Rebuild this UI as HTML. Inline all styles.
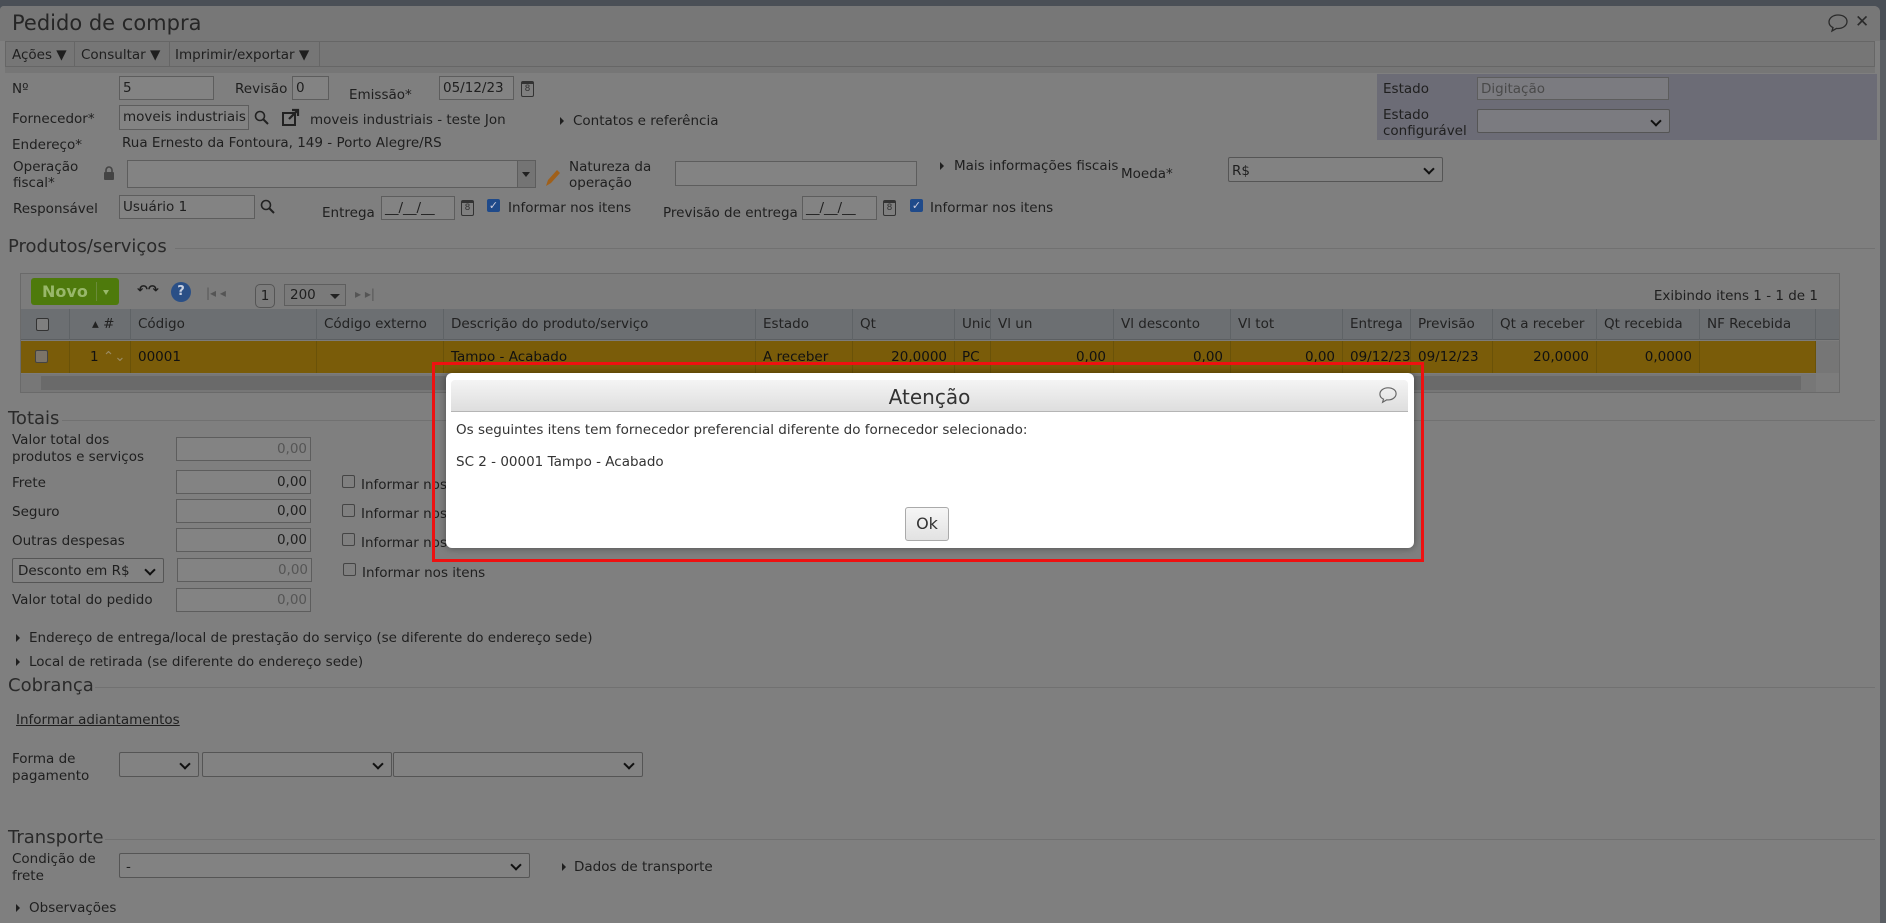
<!DOCTYPE html>
<html><head><meta charset="utf-8"><style>
*{box-sizing:border-box;margin:0;padding:0}
body{width:1886px;height:923px;overflow:hidden;background:#4a4f56;font-family:"DejaVu Sans","Liberation Sans",sans-serif;font-size:13.5px;color:#1f1f1f;position:relative}
.a{position:absolute;white-space:nowrap;line-height:16px}
.win{position:absolute;left:0;top:6px;width:1880px;height:917px;background:#7f7f7f;border-radius:4px 6px 0 0;overflow:hidden}
.inp{position:absolute;border:1px solid #5d5d5d;background:#838383;height:24px;padding:3px 3px;line-height:16px;font-size:13.5px;white-space:nowrap;overflow:hidden}
.sel{position:absolute;border:1px solid #555;background:#828282;height:25px;border-radius:2px}
.sel:after{content:"";position:absolute;right:9px;top:7px;width:6px;height:6px;border-right:2px solid #111;border-bottom:2px solid #111;transform:rotate(45deg)}
.cb{position:absolute;width:13px;height:13px;border:1px solid #444;border-radius:2px;background:#7f7f7f}
.cbc{position:absolute;width:13px;height:13px;border-radius:2px;background:#1f4a8a;color:#ccd;font-size:11px;line-height:13px;text-align:center}
.tri{position:absolute;width:0;height:0;border-left:4px solid #1f1f1f;border-top:4px solid transparent;border-bottom:4px solid transparent}
.sec{position:absolute;font-size:18px;color:#2a2a2a;line-height:20px;white-space:nowrap}
.hl{position:absolute;height:1px;background:#717171}
.cal{position:absolute;width:13px;height:16px;border:1px solid #333;border-top:3px solid #333;border-radius:2px;font-size:9px;text-align:center;line-height:11px;color:#333}
.th{position:absolute;top:0;height:31px;border-right:1px solid #5f6366;line-height:31px;padding-left:7px;color:#222;white-space:nowrap;overflow:hidden}
.td{position:absolute;top:0;height:32px;border-right:1px solid #6a5208;line-height:32px;padding:0 7px;color:#111;white-space:nowrap;overflow:hidden}
.r{text-align:right}
</style></head><body>
<div class="win">
<div style="position:absolute;left:0;top:0;width:1880px;height:35px;background:#777"></div>
<div class="a" style="left:12px;top:4px;font-size:21px;line-height:26px;color:#262626">Pedido de compra</div>
<svg style="position:absolute;left:1827px;top:7px" width="22" height="20" viewBox="0 0 22 20"><path d="M11 2C6 2 2 5 2 9c0 2.5 1.6 4.5 4 5.6L5 18l4.5-2.6c.5.1 1 .1 1.5.1 5 0 9-3 9-7S16 2 11 2z" fill="none" stroke="#2a2a2a" stroke-width="1.3"/></svg>
<div class="a" style="left:1855px;top:8px;font-size:17px;font-weight:bold;color:#2a2a2a">✕</div>
<div style="position:absolute;left:5px;top:35px;width:1870px;height:26px;background:#767676;border:1px solid #666"></div>
<div class="a" style="left:12px;top:41px">Ações ▼</div>
<div style="position:absolute;left:74px;top:36px;width:1px;height:24px;background:#666"></div>
<div class="a" style="left:81px;top:41px">Consultar ▼</div>
<div style="position:absolute;left:169px;top:36px;width:1px;height:24px;background:#666"></div>
<div class="a" style="left:175px;top:41px">Imprimir/exportar ▼</div>
<div style="position:absolute;left:319px;top:36px;width:1px;height:24px;background:#666"></div>
<div style="position:absolute;left:5px;top:61px;width:1870px;height:6px;background:#767676"></div>

<div style="position:absolute;left:1377px;top:68px;width:500px;height:66px;background:#6c6c76"></div>
<div class="a" style="left:1383px;top:75px">Estado</div>
<div class="inp" style="left:1477px;top:71px;width:192px;height:23px;background:#7b7b80;color:#4a4a4a">Digitação</div>
<div class="a" style="left:1383px;top:101px;line-height:16px">Estado<br>configurável</div>
<div class="sel" style="left:1477px;top:103px;width:193px;height:24px;background:#7b7b80"></div>

<div class="a" style="left:12px;top:75px">Nº</div>
<div class="inp" style="left:119px;top:70px;width:95px">5</div>
<div class="a" style="left:235px;top:75px">Revisão</div>
<div class="inp" style="left:292px;top:70px;width:37px">0</div>
<div class="a" style="left:349px;top:81px">Emissão*</div>
<div class="inp" style="left:439px;top:70px;width:75px">05/12/23</div>
<div class="cal" style="left:521px;top:75px">8</div>

<div class="a" style="left:12px;top:105px">Fornecedor*</div>
<div class="inp" style="left:119px;top:99px;width:130px;height:25px">moveis industriais</div>
<svg style="position:absolute;left:254px;top:104px" width="16" height="16"><circle cx="6" cy="6" r="4.5" fill="none" stroke="#222" stroke-width="1.6"/><path d="M9.5 9.5L14 14" stroke="#222" stroke-width="2"/></svg>
<svg style="position:absolute;left:281px;top:102px" width="20" height="20"><rect x="2" y="5" width="12" height="12" fill="none" stroke="#222" stroke-width="2"/><path d="M8 11L17 2M11 2h6v6" fill="none" stroke="#222" stroke-width="2.2"/></svg>
<div class="a" style="left:310px;top:106px">moveis industriais - teste Jon</div>
<div class="tri" style="left:560px;top:111px"></div>
<div class="a" style="left:573px;top:107px">Contatos e referência</div>

<div class="a" style="left:12px;top:131px">Endereço*</div>
<div class="a" style="left:122px;top:129px">Rua Ernesto da Fontoura, 149 - Porto Alegre/RS</div>

<div class="a" style="left:13px;top:153px;line-height:16px">Operação<br>fiscal*</div>
<svg style="position:absolute;left:103px;top:159px" width="12" height="16"><path d="M3 7V5a3 3 0 016 0v2" fill="none" stroke="#444" stroke-width="1.6"/><rect x="1" y="7" width="10" height="8" rx="1" fill="#444"/></svg>
<div class="inp" style="left:127px;top:154px;width:409px;height:28px"></div>
<div style="position:absolute;left:517px;top:155px;width:18px;height:26px;background:#747474;border-left:1px solid #5d5d5d"></div>
<div style="position:absolute;left:522px;top:166px;border-top:5px solid #222;border-left:4px solid transparent;border-right:4px solid transparent"></div>
<svg style="position:absolute;left:543px;top:162px" width="18" height="20"><path d="M3 18l2-6L14 2l3 3-9 10z" fill="#a0601a"/></svg>
<div class="a" style="left:569px;top:153px;line-height:16px">Natureza da<br>operação</div>
<div class="inp" style="left:675px;top:155px;width:242px;height:25px"></div>
<div class="tri" style="left:940px;top:156px"></div>
<div class="a" style="left:954px;top:152px">Mais informações fiscais</div>
<div class="a" style="left:1121px;top:160px">Moeda*</div>
<div class="sel" style="left:1228px;top:151px;width:215px;height:25px"></div>
<div class="a" style="left:1232px;top:157px">R$</div>

<div class="a" style="left:13px;top:195px">Responsável</div>
<div class="inp" style="left:119px;top:189px;width:136px">Usuário 1</div>
<svg style="position:absolute;left:260px;top:193px" width="16" height="16"><circle cx="6" cy="6" r="4.5" fill="none" stroke="#222" stroke-width="1.6"/><path d="M9.5 9.5L14 14" stroke="#222" stroke-width="2"/></svg>
<div class="a" style="left:322px;top:199px">Entrega</div>
<div class="inp" style="left:381px;top:190px;width:74px">__/__/__</div>
<div class="cal" style="left:461px;top:194px">8</div>
<div class="cbc" style="left:487px;top:193px">✓</div>
<div class="a" style="left:508px;top:194px">Informar nos itens</div>
<div class="a" style="left:663px;top:199px">Previsão de entrega</div>
<div class="inp" style="left:802px;top:190px;width:75px">__/__/__</div>
<div class="cal" style="left:883px;top:194px">8</div>
<div class="cbc" style="left:910px;top:193px">✓</div>
<div class="a" style="left:930px;top:194px">Informar nos itens</div>

<div class="sec" style="left:8px;top:231px">Produtos/serviços</div>
<div class="hl" style="left:175px;top:242px;width:1700px"></div>

<div style="position:absolute;left:20px;top:267px;width:1820px;height:120px;border:1px solid #6a6a6a;background:#7c7c7c"></div>
<div style="position:absolute;left:31px;top:272px;width:88px;height:27px;background:#4e7a0c;border-radius:3px"></div>
<div class="a" style="left:42px;top:277px;font-weight:bold;font-size:16px;line-height:18px;color:#98b86a">Novo</div>
<div style="position:absolute;left:96px;top:276px;width:1px;height:19px;background:#6a8a3a"></div>
<div style="position:absolute;left:103px;top:284px;border-top:5px solid #98b86a;border-left:3px solid transparent;border-right:3px solid transparent"></div>
<div class="a" style="left:137px;top:277px;font-weight:bold;font-size:13px">↶↷</div>
<div style="position:absolute;left:171px;top:276px;width:20px;height:20px;border-radius:50%;background:#2a4f86;color:#c8d0e0;font-size:13px;text-align:center;line-height:20px;font-weight:bold">?</div>
<div class="a" style="left:206px;top:279px;color:#555;font-size:12px">|◂ ◂</div>
<div style="position:absolute;left:255px;top:278px;width:20px;height:24px;border:1px solid #555;border-radius:5px;text-align:center;line-height:22px">1</div>
<div style="position:absolute;left:284px;top:278px;width:62px;height:22px;border:1px solid #5e5e5e;background:#7a7a7a;padding-left:5px;line-height:20px">200</div>
<div style="position:absolute;left:330px;top:288px;border-top:5px solid #222;border-left:5px solid transparent;border-right:5px solid transparent"></div>
<div class="a" style="left:355px;top:280px;color:#555;font-size:12px">▸ ▸|</div>
<div class="a" style="left:1818px;top:282px;transform:translateX(-100%)">Exibindo itens 1 - 1 de 1</div>

<div style="position:absolute;left:21px;top:303px;width:1818px;height:31px;background:#6c6f72;border-bottom:1px solid #5c5f62">
<div class="th" style="left:0;width:49px"></div>
<div class="cb" style="left:15px;top:9px;border-color:#333"></div>
<div class="th" style="left:49px;width:61px;padding-left:22px">▴ #</div>
<div class="th" style="left:110px;width:186px">Código</div>
<div class="th" style="left:296px;width:127px">Código externo</div>
<div class="th" style="left:423px;width:312px">Descrição do produto/serviço</div>
<div class="th" style="left:735px;width:97px">Estado</div>
<div class="th" style="left:832px;width:102px">Qt</div>
<div class="th" style="left:934px;width:36px">Unid</div>
<div class="th" style="left:970px;width:123px">Vl un</div>
<div class="th" style="left:1093px;width:117px">Vl desconto</div>
<div class="th" style="left:1210px;width:112px">Vl tot</div>
<div class="th" style="left:1322px;width:68px">Entrega</div>
<div class="th" style="left:1390px;width:82px">Previsão</div>
<div class="th" style="left:1472px;width:104px">Qt a receber</div>
<div class="th" style="left:1576px;width:103px">Qt recebida</div>
<div class="th" style="left:1679px;width:116px">NF Recebida</div>
</div>
<div style="position:absolute;left:21px;top:335px;width:1795px;height:32px;background:#7a5c09">
<div class="td" style="left:0;width:49px"></div>
<div class="cb" style="left:14px;top:9px;border-color:#444;background:#7c7468"></div>
<div class="td" style="left:49px;width:61px;padding-left:20px">1 <span style="color:#9a8a60">⌃⌄</span></div>
<div class="td" style="left:110px;width:186px">00001</div>
<div class="td" style="left:296px;width:127px"></div>
<div class="td" style="left:423px;width:312px">Tampo - Acabado</div>
<div class="td" style="left:735px;width:97px">A receber</div>
<div class="td r" style="left:832px;width:102px">20,0000</div>
<div class="td" style="left:934px;width:36px">PC</div>
<div class="td r" style="left:970px;width:123px">0,00</div>
<div class="td r" style="left:1093px;width:117px">0,00</div>
<div class="td r" style="left:1210px;width:112px">0,00</div>
<div class="td" style="left:1322px;width:68px">09/12/23</div>
<div class="td" style="left:1390px;width:82px">09/12/23</div>
<div class="td r" style="left:1472px;width:104px">20,0000</div>
<div class="td r" style="left:1576px;width:103px">0,0000</div>
<div class="td" style="left:1679px;width:116px"></div>
</div>
<div style="position:absolute;left:1816px;top:335px;width:23px;height:32px;background:#767676"></div>
<div style="position:absolute;left:21px;top:368px;width:1795px;height:18px;background:#777"></div>
<div style="position:absolute;left:41px;top:370px;width:1760px;height:14px;background:#6a6a6a"></div>

<div class="sec" style="left:8px;top:403px">Totais</div>
<div class="hl" style="left:62px;top:414px;width:1813px"></div>
<div class="a" style="left:12px;top:426px;line-height:17px">Valor total dos<br>produtos e serviços</div>
<div class="inp r" style="left:176px;top:431px;width:135px;color:#555">0,00</div>
<div class="a" style="left:12px;top:469px">Frete</div>
<div class="inp r" style="left:176px;top:464px;width:135px">0,00</div>
<div class="cb" style="left:342px;top:469px"></div><div class="a" style="left:361px;top:471px">Informar nos itens</div>
<div class="a" style="left:12px;top:498px">Seguro</div>
<div class="inp r" style="left:176px;top:493px;width:135px">0,00</div>
<div class="cb" style="left:342px;top:498px"></div><div class="a" style="left:361px;top:500px">Informar nos itens</div>
<div class="a" style="left:12px;top:527px">Outras despesas</div>
<div class="inp r" style="left:176px;top:522px;width:135px">0,00</div>
<div class="cb" style="left:342px;top:527px"></div><div class="a" style="left:361px;top:529px">Informar nos itens</div>
<div class="sel" style="left:12px;top:552px;width:152px;height:25px"></div>
<div class="a" style="left:18px;top:557px">Desconto em R$</div>
<div class="inp r" style="left:177px;top:552px;width:135px;color:#555">0,00</div>
<div class="cb" style="left:343px;top:557px"></div><div class="a" style="left:362px;top:559px">Informar nos itens</div>
<div class="a" style="left:12px;top:586px">Valor total do pedido</div>
<div class="inp r" style="left:176px;top:582px;width:135px;color:#555">0,00</div>

<div class="tri" style="left:16px;top:628px"></div>
<div class="a" style="left:29px;top:624px">Endereço de entrega/local de prestação do serviço (se diferente do endereço sede)</div>
<div class="tri" style="left:16px;top:652px"></div>
<div class="a" style="left:29px;top:648px">Local de retirada (se diferente do endereço sede)</div>

<div class="sec" style="left:8px;top:670px">Cobrança</div>
<div class="hl" style="left:95px;top:681px;width:1780px"></div>
<div class="a" style="left:16px;top:706px;text-decoration:underline">Informar adiantamentos</div>
<div class="a" style="left:12px;top:745px;line-height:17px">Forma de<br>pagamento</div>
<div class="sel" style="left:119px;top:746px;width:80px"></div>
<div class="sel" style="left:202px;top:746px;width:190px"></div>
<div class="sel" style="left:393px;top:746px;width:250px"></div>

<div class="sec" style="left:8px;top:822px">Transporte</div>
<div class="hl" style="left:105px;top:833px;width:1770px"></div>
<div class="a" style="left:12px;top:845px;line-height:17px">Condição de<br>frete</div>
<div class="sel" style="left:119px;top:847px;width:411px"></div>
<div class="a" style="left:126px;top:853px">-</div>
<div class="tri" style="left:562px;top:857px"></div>
<div class="a" style="left:574px;top:853px">Dados de transporte</div>
<div class="tri" style="left:16px;top:898px"></div>
<div class="a" style="left:29px;top:894px">Observações</div>
</div>
<div style="position:absolute;left:1880px;top:40px;width:6px;height:883px;background:#5a5e63"></div>

<div style="position:absolute;left:432px;top:362px;width:992px;height:200px;border:3px solid #ee1111"></div>
<div style="position:absolute;left:446px;top:373px;width:968px;height:175px;background:#fff;border-radius:6px;box-shadow:0 0 8px rgba(0,0,0,.4)"></div>
<div style="position:absolute;left:451px;top:380px;width:957px;height:32px;background:linear-gradient(#f4f4f4,#dedede);border-bottom:1px solid #b5b5b5;border-radius:4px 4px 0 0"></div>
<div class="a" style="left:451px;top:385px;width:957px;text-align:center;font-size:20px;line-height:24px;color:#333">Atenção</div>
<svg style="position:absolute;left:1378px;top:386px" width="20" height="18" viewBox="0 0 22 20"><path d="M11 2C6 2 2 5 2 9c0 2.5 1.6 4.5 4 5.6L5 18l4.5-2.6c.5.1 1 .1 1.5.1 5 0 9-3 9-7S16 2 11 2z" fill="none" stroke="#666" stroke-width="1.3"/></svg>
<div class="a" style="left:456px;top:422px;color:#333">Os seguintes itens tem fornecedor preferencial diferente do fornecedor selecionado:</div>
<div class="a" style="left:456px;top:454px;color:#333">SC 2 - 00001 Tampo - Acabado</div>
<div style="position:absolute;left:905px;top:507px;width:44px;height:34px;border:1px solid #aaa;border-radius:3px;background:linear-gradient(#f6f6f6,#e2e2e2);text-align:center;line-height:32px;font-size:16px;color:#333">Ok</div>
</body></html>
